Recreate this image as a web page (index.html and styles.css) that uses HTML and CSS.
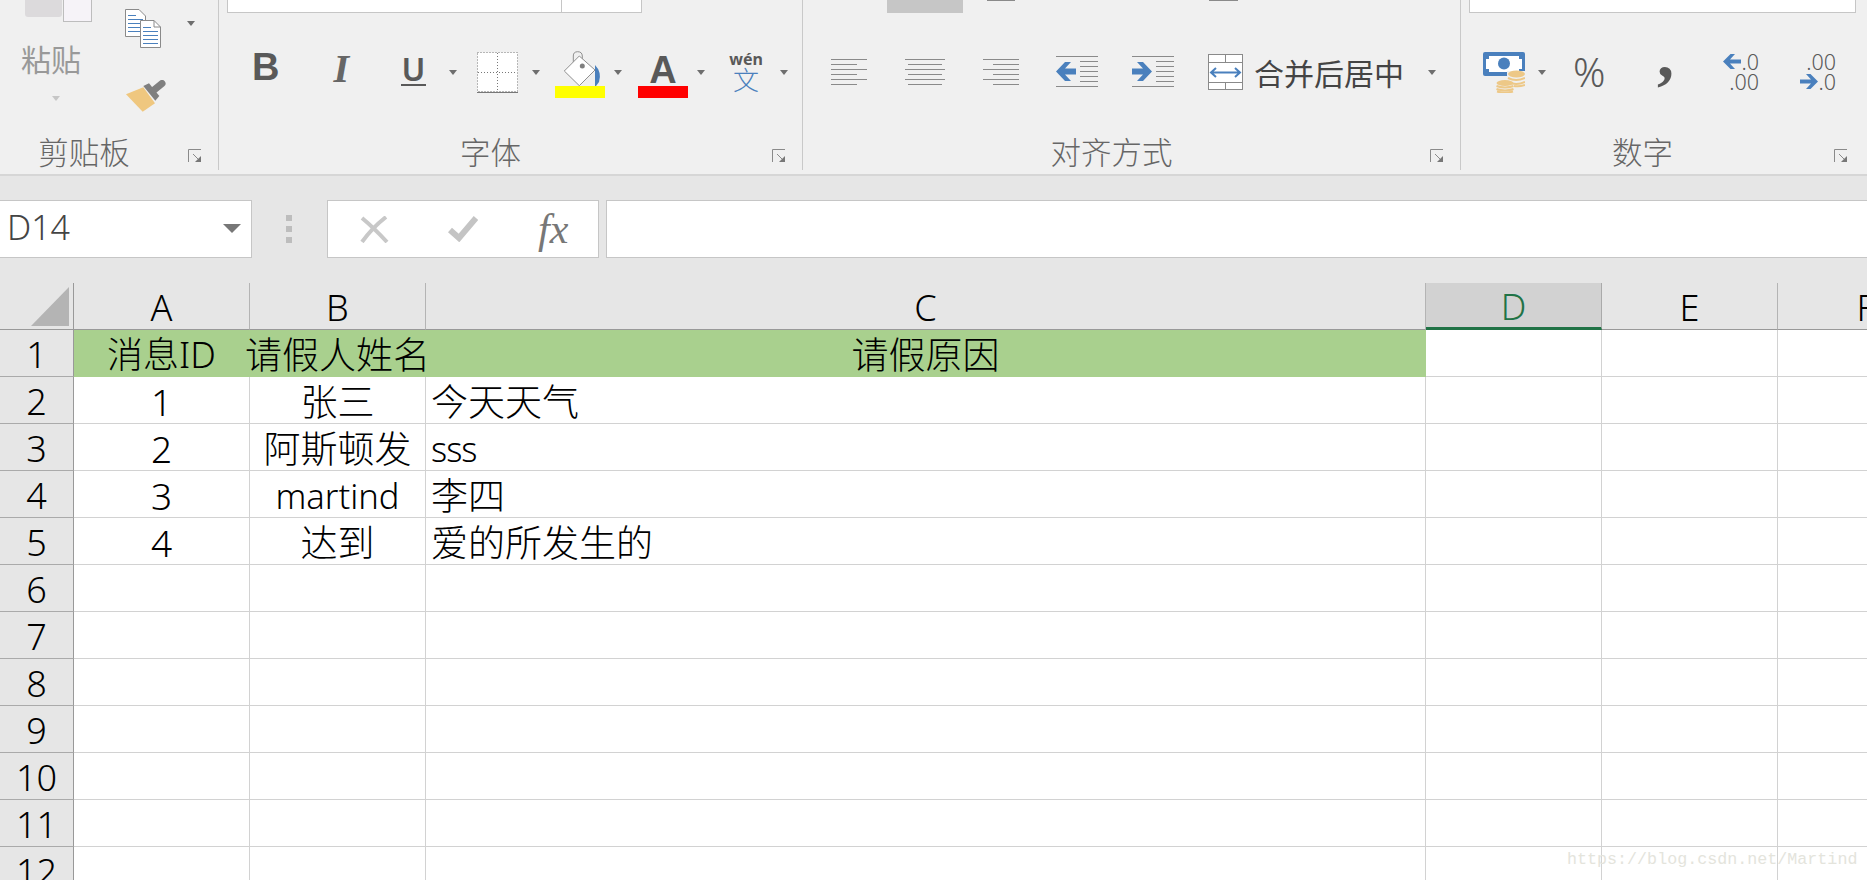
FILE: index.html
```html
<!DOCTYPE html>
<html lang="zh-CN">
<head>
<meta charset="utf-8">
<title>Excel</title>
<link rel="stylesheet" href="styles.css">
</head>
<body>
<div class="ribbon">
  <section class="group g-clip">
    <div class="clip-main">
      <div class="paste">
        <svg class="paste-ic" width="67" height="22" viewBox="0 0 67 22"><path d="M0 0H37V14Q37 17 34 17H3Q0 17 0 14Z" fill="#dcdadc"/><rect x="38.500" y="-2" width="28" height="23.500" fill="#f6f3f8" stroke="#bdbdbd"/></svg>
        <span class="paste-text">粘贴</span>
        <i class="caret caret-dis"></i>
      </div>
      <div class="clip-side">
        <div class="copy-row">
          <svg width="37" height="40" viewBox="0 0 37 40"><path d="M.5.500H14L20.500 7V27.500H.5Z" fill="#fff" stroke="#8a8a8a"/><path d="M3 6.500H11M3 10.500H18M3 14.500H18M3 18.500H18M3 22.500H18" stroke="#4a80bd"/><path d="M15.500 11.500H29L35.500 18V38.500H15.500Z" fill="#fff" stroke="#8a8a8a"/><path d="M29 11.500V18H35.500" fill="none" stroke="#8a8a8a"/><path d="M18 18.500H26M18 22.500H33M18 26.500H33M18 30.500H33M18 34.500H33" stroke="#4a80bd"/></svg>
          <i class="caret caret-copy"></i>
        </div>
        <svg class="brush" width="40" height="33" viewBox="0 0 40 33"><path d="M0 14.300 17.300 7.300 29 23.300 16.700 31.700Z" fill="#efc77f"/><path d="M17.300 6 23 3.300 33.300 16 29.300 20.700Z" fill="#7f7f7f"/><path d="M28 10 36 3.500" stroke="#7f7f7f" stroke-width="7" stroke-linecap="round"/></svg>
      </div>
    </div>
    <div class="label-row"><span class="label">剪贴板</span><svg class="launcher" width="13" height="13" viewBox="0 0 13 13"><path d="M.5 13V.5H13M5 5 10 10" fill="none" stroke="#8a8a8a"/><path d="M13 7V13H7Z" fill="#777"/></svg></div>
  </section>

  <section class="group g-font">
    <div class="top top-font"><div class="field field-name"></div><div class="field field-size"></div></div>
    <div class="mid">
      <span class="fb fb-b">B</span>
      <span class="fb fb-i">I</span>
      <span class="fb fb-u">U</span>
      <i class="caret caret-u"></i>
      <svg class="ic-border" width="41" height="41" viewBox="0 0 41 41"><rect x=".5" y=".5" width="40" height="39" fill="#fff" stroke="#777" stroke-dasharray="1 2"/><path d="M20.500 1V40M1 20.500H40" stroke="#777" stroke-dasharray="1 2"/><path d="M0 40.500H41" stroke="#777"/></svg>
      <i class="caret caret-border"></i>
      <svg class="ic-fill" width="50" height="47" viewBox="0 51 50 47"><path d="M18.300 63.300V56Q18.300 51.700 22.700 51.700T27.300 56V66" fill="none" stroke="#8f8f8f"/><path d="M9.300 71 24.300 56 40 70 24.300 85.700Z" fill="#fff" stroke="#8f8f8f"/><circle cx="27.300" cy="66" r="2.500" fill="#7f7f7f"/><path d="M40 65Q47 72 44 82L41 86H40Z" fill="#4a80bd"/><rect y="86" width="50" height="12" fill="#ff0"/></svg>
      <i class="caret caret-fill"></i>
      <div class="font-color"><span class="fc-a">A</span><span class="fc-bar"></span></div>
      <i class="caret caret-color"></i>
      <div class="wen"><span class="wen-top">wén</span><span class="wen-bot">文</span></div>
      <i class="caret caret-wen"></i>
    </div>
    <div class="label-row"><span class="label">字体</span><svg class="launcher" width="13" height="13" viewBox="0 0 13 13"><path d="M.5 13V.5H13M5 5 10 10" fill="none" stroke="#8a8a8a"/><path d="M13 7V13H7Z" fill="#777"/></svg></div>
  </section>

  <section class="group g-align">
    <div class="top top-align"><div class="pressed"></div><div class="bit bit-a"></div><div class="bit bit-b"></div></div>
    <div class="mid">
      <svg class="ic-left" width="36" height="26" viewBox="0 0 36 26"><path d="M0 .5H36M0 5.500H26M0 10.500H36M0 15.500H26M0 20.500H36M0 25.500H26" stroke="#8a8a8a"/></svg>
      <svg class="ic-center" width="40" height="26" viewBox="0 0 40 26"><path d="M0 .5H40M3 5.500H37M0 10.500H40M3 15.500H37M0 20.500H40M3 25.500H37" stroke="#8a8a8a"/></svg>
      <svg class="ic-right" width="36" height="26" viewBox="0 0 36 26"><path d="M0 .5H36M10 5.500H36M0 10.500H36M10 15.500H36M0 20.500H36M10 25.500H36" stroke="#8a8a8a"/></svg>
      <svg class="ic-outdent" width="42" height="32" viewBox="0 0 42 32"><path d="M0 .5H42M0 30.500H42M24 5.500H42M24 10.500H42M24 15.500H42M24 20.500H42M24 25.500H42" stroke="#8a8a8a"/><path d="M0 15.500 9 6H15L9 12.500H20V18.500H9L15 25H9Z" fill="#4a80bd"/></svg>
      <svg class="ic-indent" width="42" height="32" viewBox="0 0 42 32"><path d="M0 .5H42M0 30.500H42M24 5.500H42M24 10.500H42M24 15.500H42M24 20.500H42M24 25.500H42" stroke="#8a8a8a"/><path d="M20 15.500 11 6H5L11 12.500H0V18.500H11L5 25H11Z" fill="#4a80bd"/></svg>
      <svg class="ic-merge" width="35" height="36" viewBox="0 0 35 36"><rect x=".5" y=".5" width="34" height="35" fill="#fff" stroke="#8a8a8a"/><path d="M0 8.500H35M0 28.500H35M17.500 0V8M17.500 29V36" stroke="#8a8a8a"/><path d="M3 18.500H32M8 14 3 18.500 8 23M27 14 32 18.500 27 23" fill="none" stroke="#4a80bd" stroke-width="2"/></svg>
      <span class="merge-text">合并后居中</span>
      <i class="caret caret-merge"></i>
    </div>
    <div class="label-row"><span class="label">对齐方式</span><svg class="launcher" width="13" height="13" viewBox="0 0 13 13"><path d="M.5 13V.5H13M5 5 10 10" fill="none" stroke="#8a8a8a"/><path d="M13 7V13H7Z" fill="#777"/></svg></div>
  </section>

  <section class="group g-num">
    <div class="top top-num"><div class="field field-format"></div></div>
    <div class="mid">
      <svg class="ic-money" width="42" height="41" viewBox="0 0 42 41"><rect width="42" height="24" rx="2" fill="#4a80bd"/><path d="M6 4H36V7H39V17H36V20H6V17H3V7H6Z" fill="#fff"/><circle cx="21" cy="11.500" r="6" fill="#4a80bd"/><path d="M24 19H42V34H30V28H24Z" fill="#f0f0f0"/><ellipse cx="33.500" cy="22" rx="8.500" ry="3.500" fill="#edc887"/><path d="M25 26Q33 30 42 26M25 30Q33 34 42 30M31 34Q36 35 42 33" fill="none" stroke="#edc887" stroke-width="2"/><ellipse cx="22" cy="31" rx="8.500" ry="3" fill="#edc887"/><path d="M13.500 34Q22 37 30.500 34M13.500 37Q22 40 30.500 37M14 39.500Q22 42 30 39.500" fill="none" stroke="#edc887" stroke-width="2"/></svg>
      <i class="caret caret-money"></i>
      <span class="pct">%</span>
      <span class="comma">,</span>
      <div class="dec dec-up">
        <div class="dec-line"><svg width="18" height="15" viewBox="0 0 18 15"><path d="M0 7.500 7.500 0H12L7 5.500H18V9.500H7L12 15H7.500Z" fill="#4a80bd"/></svg><span>.0</span></div>
        <div class="dec-line"><span>.00</span></div>
      </div>
      <div class="dec dec-down">
        <div class="dec-line"><span>.00</span></div>
        <div class="dec-line"><svg width="18" height="15" viewBox="0 0 18 15"><path d="M18 7.500 10.500 0H6L11 5.500H0V9.500H11L6 15H10.500Z" fill="#4a80bd"/></svg><span>.0</span></div>
      </div>
    </div>
    <div class="label-row"><span class="label">数字</span><svg class="launcher" width="13" height="13" viewBox="0 0 13 13"><path d="M.5 13V.5H13M5 5 10 10" fill="none" stroke="#8a8a8a"/><path d="M13 7V13H7Z" fill="#777"/></svg></div>
  </section>
</div>

<div class="formula-bar">
  <div class="name-box"><span class="name-text">D14</span><i class="caret caret-name"></i></div>
  <div class="grip"><i></i><i></i><i></i></div>
  <div class="fx-box">
    <svg class="ic-x" width="29" height="27" viewBox="0 0 29 27"><path d="M2 2Q14 12 27 26M26 1Q12 12 2 26" fill="none" stroke="#c8c8c8" stroke-width="4"/></svg>
    <svg class="ic-check" width="30" height="26" viewBox="0 0 30 26"><path d="M2 14 11 22 28 2" fill="none" stroke="#c4c4c4" stroke-width="6"/></svg>
    <span class="fx">fx</span>
  </div>
  <div class="formula-input"></div>
</div>

<div class="sheet">
  <div class="corner"><svg width="38" height="39" viewBox="0 0 38 39"><path d="M38 0V39H0Z" fill="#b4b4b4"/></svg></div>
  <div class="ch">A</div><div class="ch">B</div><div class="ch">C</div><div class="ch ch-active">D</div><div class="ch">E</div><div class="ch">F</div>

  <div class="rh">1</div><div class="c hd hd-id">消息ID</div><div class="c hd">请假人姓名</div><div class="c hd">请假原因</div><div class="c"></div><div class="c"></div><div class="c"></div>
  <div class="rh">2</div><div class="c ctr">1</div><div class="c ctr">张三</div><div class="c">今天天气</div><div class="c"></div><div class="c"></div><div class="c"></div>
  <div class="rh">3</div><div class="c ctr">2</div><div class="c ctr">阿斯顿发</div><div class="c lat tight">sss</div><div class="c"></div><div class="c"></div><div class="c"></div>
  <div class="rh">4</div><div class="c ctr">3</div><div class="c ctr lat">martind</div><div class="c">李四</div><div class="c"></div><div class="c"></div><div class="c"></div>
  <div class="rh">5</div><div class="c ctr">4</div><div class="c ctr">达到</div><div class="c">爱的所发生的</div><div class="c"></div><div class="c"></div><div class="c"></div>
  <div class="rh">6</div><div class="c"></div><div class="c"></div><div class="c"></div><div class="c"></div><div class="c"></div><div class="c"></div>
  <div class="rh">7</div><div class="c"></div><div class="c"></div><div class="c"></div><div class="c"></div><div class="c"></div><div class="c"></div>
  <div class="rh">8</div><div class="c"></div><div class="c"></div><div class="c"></div><div class="c"></div><div class="c"></div><div class="c"></div>
  <div class="rh">9</div><div class="c"></div><div class="c"></div><div class="c"></div><div class="c"></div><div class="c"></div><div class="c"></div>
  <div class="rh">10</div><div class="c"></div><div class="c"></div><div class="c"></div><div class="c"></div><div class="c"></div><div class="c"></div>
  <div class="rh">11</div><div class="c"></div><div class="c"></div><div class="c"></div><div class="c"></div><div class="c"></div><div class="c"></div>
  <div class="rh">12</div><div class="c"></div><div class="c"></div><div class="c"></div><div class="c"></div><div class="c"></div><div class="c"></div>
</div>

<div class="watermark">https://blog.csdn.net/Martind</div>
</body>
</html>
```
FILE: styles.css
```css
* { box-sizing: border-box; }
html, body { margin: 0; height: 880px; overflow: hidden; }
body {
  position: relative;
  width: 1867px;
  background: #e6e6e6;
  font-family: "Noto Sans", "Noto Sans CJK SC", sans-serif;
  font-weight: 300;
}
svg { display: block; flex: none; }
i { display: block; }

/* ribbon */
.ribbon {
  display: flex;
  height: 176px;
  padding-bottom: 4px;
  background: #f0f0f0;
  border-bottom: 2px solid #d6d6d6;
}
.group {
  display: flex;
  flex-direction: column;
  flex: none;
  border-right: 1px solid #c9c9c9;
}
.g-clip { width: 219px; }
.g-font { width: 584px; }
.g-align { width: 658px; }
.g-num { width: 406px; border-right: 0; }

.top { display: flex; height: 13px; flex: none; }
.mid { display: flex; align-items: center; height: 118px; flex: none; color: #595959; }

.label-row { display: flex; flex: 1; align-items: center; padding: 3px 17px 0 0; }
.label { flex: 1; text-align: center; font-size: 30.500px; line-height: 34px; color: #666; }
.launcher { margin-left: 10px; margin-top: 7px; }
.g-clip .launcher { margin-left: 20px; }
.g-num .label-row { padding-right: 20px; }

.caret {
  flex: none;
  width: 0;
  height: 0;
  border-left: 4.500px solid transparent;
  border-right: 4.500px solid transparent;
  border-top: 5px solid #6e6e6e;
}

/* clipboard */
.clip-main { display: flex; height: 131px; flex: none; }
.paste { display: flex; flex-direction: column; align-items: flex-start; width: 125px; padding-left: 21px; }
.paste-ic { margin-left: 4px; }
.paste-text { font-size: 30px; line-height: 38px; margin-top: 19px; color: #999; font-weight: 400; }
.caret-dis { margin: 17px 0 0 31px; border-top-color: #c6c6c6; }
.clip-side { display: flex; flex-direction: column; padding-top: 9px; }
.copy-row { display: flex; align-items: center; }
.caret-copy { margin-left: 25px; margin-top: -11px; }
.brush { margin: 31px 0 0 1px; }

/* font */
.field { height: 13px; background: #fff; border: 1px solid #c6c6c6; border-top: 0; }
.top-font { padding-left: 8px; }
.field-name { width: 335px; }
.field-size { width: 80px; margin-left: 0; border-left: 0; }
.fb { flex: none; line-height: 1; }
.fb-b { margin: -10px 0 0 33px; font: 700 38px "Liberation Sans", sans-serif; }
.fb-i { margin: -8px 0 0 54px; font: italic 700 40px "Liberation Serif", serif; color: #666; }
.fb-u { margin: -4px 0 0 52px; font: 600 32px "Noto Sans", sans-serif; width: 25px; border-bottom: 2px solid #595959; line-height: 30px; text-align: center; }
.caret-u { margin-left: 23px; }
.ic-border { margin-left: 20px; }
.caret-border { margin-left: 14px; }
.ic-fill { margin: 5px 0 0 15px; }
.caret-fill { margin-left: 9px; }
.font-color { display: flex; flex-direction: column; align-items: center; width: 50px; margin: 8px 0 0 16px; }
.fc-a { font: 700 38px/32px "Liberation Sans", sans-serif; height: 32px; }
.fc-bar { width: 50px; height: 12px; background: #f00; }
.caret-color { margin-left: 9px; }
.wen { display: flex; flex-direction: column; align-items: center; width: 34px; margin-left: 24px; }
.wen-top { font: 700 16px/16px "Noto Sans", sans-serif; }
.wen-bot { font-size: 26px; line-height: 26px; color: #4a80bd; }
.caret-wen { margin-left: 17px; }

/* alignment */
.top-align { position: relative; }
.pressed { width: 76px; height: 13px; margin-left: 84px; background: #c6c6c6; }
.bit { height: 1px; background: #8a8a8a; }
.bit-a { width: 28px; margin-left: 24px; }
.bit-b { width: 29px; margin-left: 194px; }
.ic-left { margin-left: 28px; }
.ic-center { margin-left: 38px; }
.ic-right { margin-left: 38px; }
.ic-outdent { margin-left: 37px; }
.ic-indent { margin-left: 34px; }
.ic-merge { margin-left: 34px; }
.merge-text { margin: 3px 0 0 11px; font-size: 30px; line-height: 40px; color: #444; font-weight: 400; }
.caret-merge { margin-left: 24px; }

/* number */
.top-num { padding-left: 8px; }
.field-format { width: 387px; }
.ic-money { margin-left: 22px; }
.caret-money { margin-left: 13px; }
.pct { margin: 0 0 0 27px; font-size: 40px; line-height: 44px; width: 34px; font-weight: 300; }
.comma { margin: -36px 0 0 50px; font: 700 68px/60px "Liberation Serif", serif; }
.dec { display: flex; flex-direction: column; align-items: flex-end; font: 300 21.500px/20px "Noto Sans", sans-serif; margin-top: -1px; }
.dec-line { display: flex; align-items: center; height: 20px; }
.dec-up { width: 40px; margin-left: 45px; }
.dec-down { width: 40px; margin-left: 37px; }

/* formula bar */
.formula-bar { display: flex; height: 58px; margin-top: 24px; }
.name-box {
  display: flex; align-items: center; justify-content: space-between;
  width: 252px; padding: 0 10px 4px 7px;
  background: #fff; border: 1px solid #c6c6c6; border-left: 0;
}
.name-text { font-size: 34px; line-height: 44px; color: #444; }
.caret-name { border-left-width: 9px; border-right-width: 9px; border-top-width: 9px; border-top-color: #777; margin-top: 3px; }
.grip { display: flex; flex-direction: column; justify-content: center; gap: 5px; width: 75px; padding-left: 34px; }
.grip i { width: 6px; height: 6px; background: #bdbdbd; }
.fx-box {
  display: flex; align-items: center;
  width: 272px; padding-left: 32px;
  background: #fff; border: 1px solid #c6c6c6;
}
.ic-check { margin-left: 59px; }
.fx { margin-left: 60px; font: italic 400 42px/48px "Liberation Serif", serif; color: #777; }
.formula-input { flex: 1; margin-left: 7px; background: #fff; border: 1px solid #c6c6c6; border-right: 0; }

/* sheet */
.sheet {
  display: grid;
  grid-template-columns: 74px 176px 176px 1000px 176px 176px 176px;
  grid-template-rows: 47px repeat(12, 47px);
  margin-top: 25px;
  font-size: 37px;
  color: #000;
  background: #fff;
}
.corner { display: flex; align-items: flex-end; justify-content: flex-end; padding: 0 4px 3px 0; background: #e6e6e6; border-right: 1px solid #999; border-bottom: 1px solid #999; }
.ch {
  display: flex; align-items: center; justify-content: center;
  background: #e6e6e6;
  border-bottom: 1px solid #999;
  border-right: 1px solid #b4b4b4;
  padding-top: 4px;
  font-size: 36px;
  line-height: 42px;
}
.ch-active { background: #d2d2d2; color: #217346; border-bottom: 3px solid #217346; border-right-color: #aaa; }
.rh {
  display: flex; align-items: center; justify-content: center;
  background: #e6e6e6;
  border-right: 1px solid #999;
  border-bottom: 1px solid #aaa;
  padding-top: 4px;
  font-size: 36px;
  line-height: 42px;
}
.c {
  display: flex; align-items: center;
  padding-left: 5px;
  padding-top: 4px;
  white-space: nowrap;
  border-right: 1px solid #d2d2d2;
  border-bottom: 1px solid #d2d2d2;
  line-height: 42px;
}
.ctr { justify-content: center; padding-left: 0; }
.hd { justify-content: center; padding-left: 0; background: #a9d08e; border-color: #a9d08e; }
.hd-id { font-size: 36px; }
.lat { font-size: 34.500px; }
.tight { letter-spacing: -1px; }

.watermark {
  position: absolute;
  left: 1567px;
  top: 850px;
  font: 400 16.700px/20px "Liberation Mono", monospace;
  color: #e4e4dc;
  white-space: nowrap;
}
```
